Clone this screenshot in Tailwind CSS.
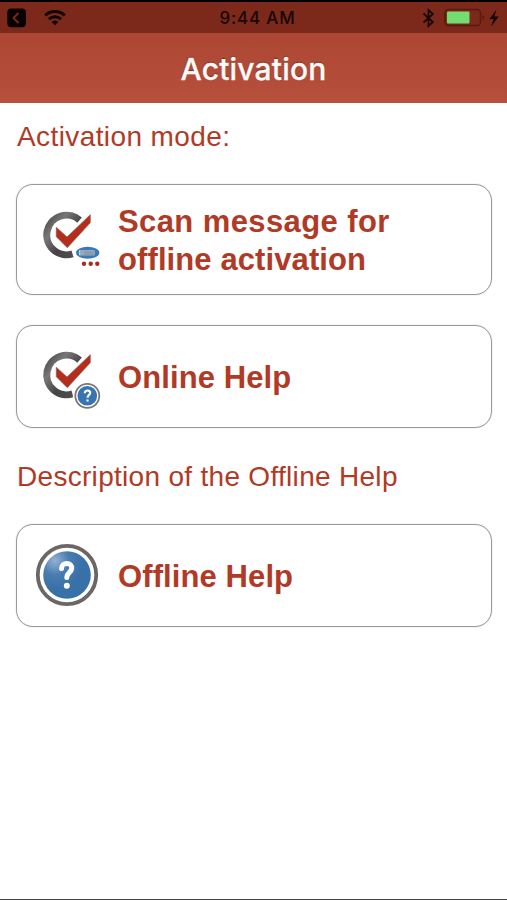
<!DOCTYPE html>
<html lang="en">
<head>
<meta charset="utf-8">
<title>Activation</title>
<script src="https://cdn.jsdelivr.net/npm/@tailwindcss/browser@4"></script>
</head>
<body class="bg-white">
<svg width="0" height="0" class="absolute">
  <defs>
    <linearGradient id="ring" x1="0" y1="0" x2="1" y2="1"><stop offset="0" stop-color="#474747"/><stop offset=".28" stop-color="#777"/><stop offset=".6" stop-color="#454545"/><stop offset="1" stop-color="#505050"/></linearGradient>
    <radialGradient id="blue" cx=".25" cy=".2" r=".6"><stop offset="0" stop-color="#91b2d4"/><stop offset=".5" stop-color="#497cae"/><stop offset="1" stop-color="#3870a8"/></radialGradient>
    <g id="check">
      <path d="M36.600 10.100A19.800 19.800 0 1 0 29.500 43.900" fill="none" stroke="url(#ring)" stroke-width="7"/>
      <path d="M13.300 17.300L24 27L47.300 4.700V12.700L24.300 37.700L13.300 26.700Z" fill="#fff" stroke="#fff" stroke-width="3.500"/>
      <path d="M13.300 17.300L24 27L47.300 4.700V12.700L24.300 37.700L13.300 26.700Z" fill="#b62e1b" stroke="#85605b" stroke-width=".7"/>
    </g>
  </defs>
</svg>
<div class="flex h-[900px] w-[507px] flex-col overflow-hidden border-b border-[#444] bg-white font-['Liberation_Sans',sans-serif] text-[#b03a25]">
  <header class="h-[102.500px] shrink-0 border-t-2 border-black bg-linear-to-b from-[#a8432f] to-[#b6503d]">
    <div class="grid h-[31px] grid-cols-[1fr_auto_1fr] items-center bg-[#7c291b] text-[#160503]">
      <div class="flex items-center gap-[17px] pl-[7px]">
        <svg width="20" height="20" viewBox="0 0 20 20"><rect x=".3" y=".5" width="18.700" height="18.700" rx="4" fill="#080100"/><path d="M11.500 4.800L6.500 10L11.500 15.200" fill="none" stroke="#7c291b" stroke-width="1.900"/></svg>
        <svg width="22" height="17" viewBox="0 0 22 17" fill="none" stroke="#100301" stroke-width="3"><path d="M1.200 6.400A14 14 0 0 1 20.800 6.400M4.900 10.200A8.800 8.800 0 0 1 17.100 10.200"/><path d="M11 16.300L7.700 13A5 5 0 0 1 14.300 13Z" fill="#100301" stroke="none"/></svg>
      </div>
      <div class="ml-[8px] pt-px font-[Inter,sans-serif] text-[17px] leading-5 font-medium tracking-[0.85px]">9:44 AM</div>
      <div class="flex items-center justify-end pr-[8px]">
        <svg width="13" height="20" viewBox="0 0 13 20" fill="none" stroke="#160503" stroke-width="1.700"><path d="M1.500 5.500L11 14L6.500 18V2L11 6L1.500 14.500"/></svg>
        <svg class="ml-[9px]" width="42" height="20" viewBox="0 0 42 20"><rect x="1" y="1.500" width="35.500" height="16" rx="3.500" fill="none" stroke="#5a180e" stroke-width="1.500"/><rect x="3" y="3.500" width="22.500" height="12" rx="1" fill="#75dc72"/><path d="M38.500 6.500Q42 9.500 38.500 12.500Z" fill="#5a180e"/></svg>
        <svg class="ml-[3px]" width="10" height="18" viewBox="0 0 10 18"><path d="M7.500 .5L.5 10H4.500L2.200 17.500L9.700 7.500H5.500Z" fill="#160503"/></svg>
      </div>
    </div>
    <h1 class="pt-4 text-center font-[Inter,sans-serif] text-[30px] leading-10 font-medium tracking-[0.2px] text-[#fffaf8] [-webkit-text-stroke:0.3px_#fffaf8] [text-shadow:0_-1px_1px_#4a2018aa]">Activation</h1>
  </header>
  <main class="flex flex-col px-[15.500px]">
    <h2 class="mt-[18px] h-8 pl-[1.500px] text-[28px] leading-8 tracking-[0.4px]">Activation mode:</h2>
    <a class="mt-[31.500px] flex h-[111px] items-center rounded-[17px] border border-[#999] pl-[26px] shadow-[0_0_1px_#999]">
      <svg class="shrink-0 overflow-visible" width="60" height="60" viewBox="0 0 60 60"><use href="#check" x="0" y="0"/><ellipse cx="44.500" cy="43" rx="13.500" ry="8" fill="#fff"/><ellipse cx="44.700" cy="42.800" rx="11.700" ry="6" fill="#377cb9"/><rect x="37" y="40" width="15" height="5.500" rx="1.500" fill="#9aaabd"/><path d="M37 40Q35.500 42.500 37 45.500" stroke="#dae8f5" fill="none"/><path d="M41 42H51M41 44H51" stroke="#7b858f" stroke-width=".7"/><g fill="#a82a24"><circle cx="41" cy="53.700" r="2.200"/><circle cx="47.700" cy="53.700" r="2.200"/><circle cx="54.300" cy="53.700" r="2.200"/></g></svg>
      <span class="ml-[15.500px] pt-[3px] text-[31px] leading-[38px] font-bold"><span class="block tracking-[0.4px]">Scan message for</span><span class="block tracking-[0.1px]">offline activation</span></span>
    </a>
    <a class="mt-[29.500px] flex h-[103px] items-center rounded-[17px] border border-[#999] pl-[26px] shadow-[0_0_1px_#999]">
      <svg class="shrink-0 overflow-visible" width="60" height="60" viewBox="0 0 60 60"><use href="#check" x="0" y="4"/><circle cx="44.300" cy="49.800" r="14.500" fill="#fff"/><circle cx="44.300" cy="49.800" r="12" fill="#fff" stroke="#777" stroke-width="1.800"/><circle cx="44.300" cy="49.800" r="9.800" fill="#3874b0"/><path d="M41.800 47.300C41.800 43.300 47.800 43.800 47.100 47.300C46.600 49.300 44.500 49.200 44.500 51.800M44.500 53.500V55.500" fill="none" stroke="#fff" stroke-width="2.200"/></svg>
      <span class="ml-[15.500px] pt-[3px] text-[31px] leading-[38px] font-bold tracking-[0.1px]">Online Help</span>
    </a>
    <h2 class="mt-[33px] h-8 pl-[1.500px] text-[28px] leading-8 tracking-[0.3px]">Description of the Offline Help</h2>
    <a class="mt-[31px] flex h-[103px] items-center rounded-[17px] border border-[#999] pl-[18.500px] shadow-[0_0_1px_#999]">
      <svg class="shrink-0" width="64" height="64" viewBox="0 0 64 64"><circle cx="32" cy="32" r="29.200" fill="#fff" stroke="#6b6766" stroke-width="3.800"/><circle cx="32" cy="32" r="23.800" fill="url(#blue)"/><path d="M26.500 25.500C26.500 18.500 37.500 19 36.700 25.500C36 30 31.800 29.500 31.800 34.500" fill="none" stroke="#fff" stroke-width="5" stroke-linecap="round"/><circle cx="31.800" cy="42.800" r="3" fill="#fff"/></svg>
      <span class="ml-[19px] pt-[3px] text-[31px] leading-[38px] font-bold tracking-[0.1px]">Offline Help</span>
    </a>
  </main>
</div>
</body>
</html>
